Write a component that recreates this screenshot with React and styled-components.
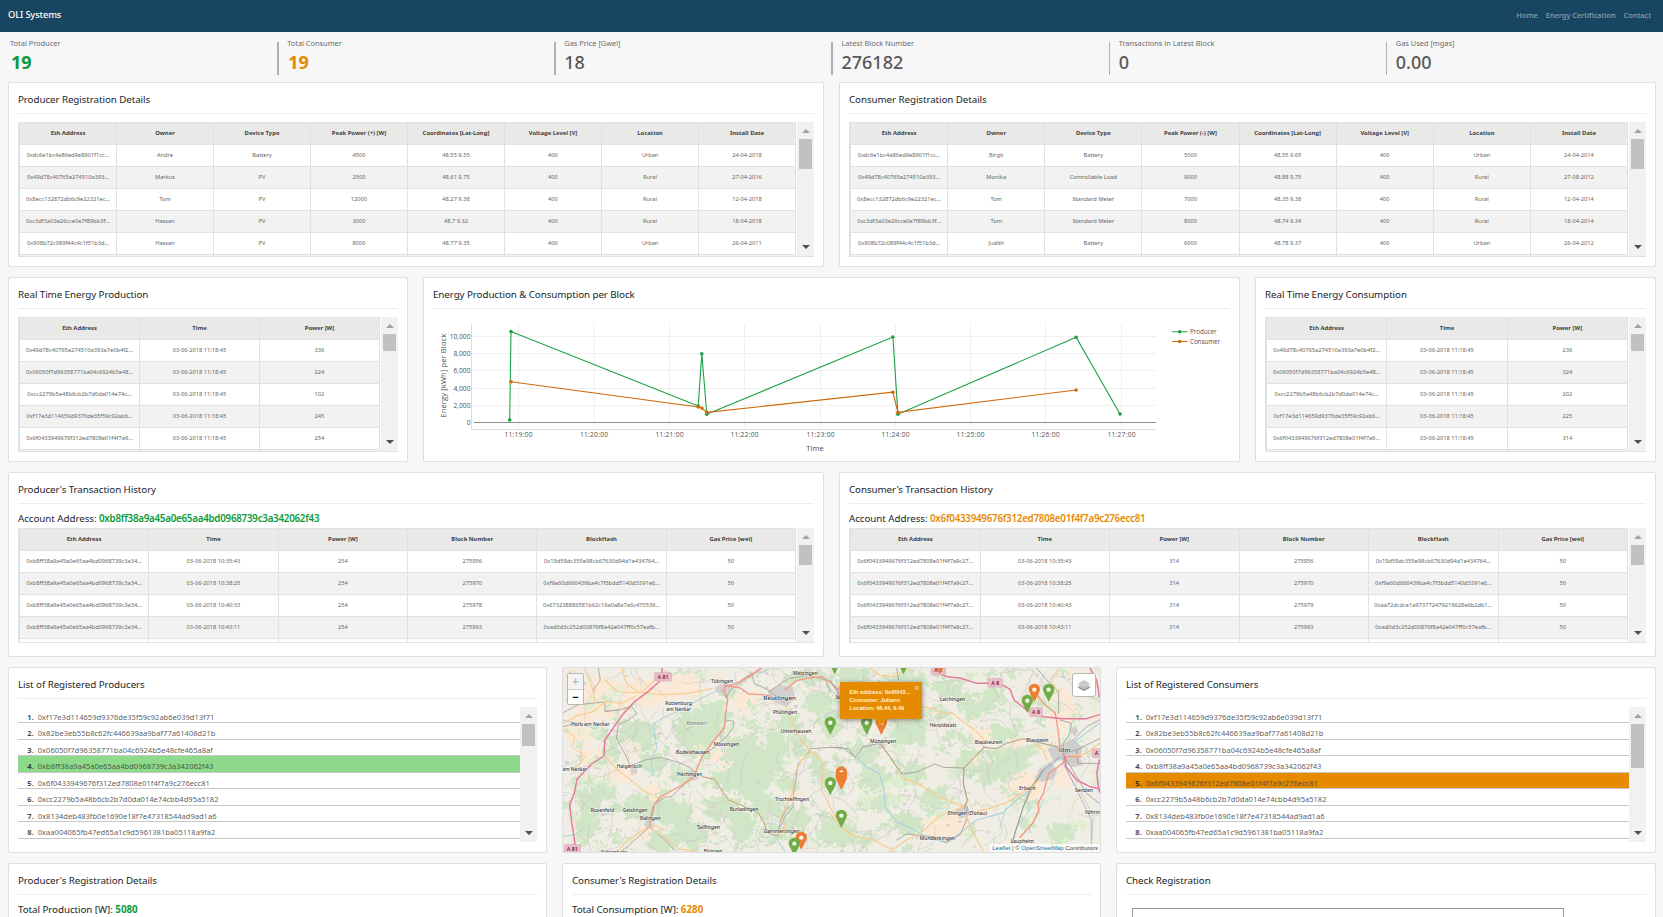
import React from "react";
import styled, { createGlobalStyle } from "styled-components";

const GREEN = "#0c9b3b";
const ORANGE = "#e68a00";

const GlobalStyle = createGlobalStyle`
  html, body { margin: 0; padding: 0; background: #f7f7f7; }
  body { font-family: "Noto Sans", "Open Sans", sans-serif; color: #212529; width: 1663px; height: 917px; overflow: hidden; }
  * { box-sizing: border-box; }
`;

const Page = styled.div`
  width: 1663px;
  height: 917px;
  overflow: hidden;
  display: flex;
  flex-direction: column;
`;

const Navbar = styled.nav`
  height: 32px;
  flex: none;
  background: #184562;
  display: flex;
  justify-content: space-between;
  padding: 5px 12px 7px 8px;
  line-height: 20px;
`;

const Brand = styled.span`
  color: #fff;
  font-size: 9.3px;
  font-weight: 500;
  letter-spacing: -0.14px;
`;

const NavLinks = styled.div`
  display: flex;
  gap: 8px;
`;

const NavLink = styled.a`
  color: #8ba2b1;
  font-size: 7.5px;
  font-weight: 500;
  letter-spacing: -0.05px;
`;

const Stats = styled.section`
  height: 50px;
  flex: none;
  display: grid;
  grid-template-columns: repeat(6, 1fr);
`;

const Stat = styled.div`
  display: flex;
  gap: ${(p) => (p.$thin ? 9 : 8)}px;
`;

const StatDivider = styled.div`
  width: ${(p) => (p.$thin ? 1 : 2)}px;
  height: 33px;
  margin-top: 10px;
  background: ${(p) => (p.$hidden ? "transparent" : "#adb1b4")};
`;

const StatText = styled.div`
  padding-top: 6px;
`;

const StatLabel = styled.div`
  font-size: 7.4px;
  line-height: 11px;
  color: #6a6a6a;
`;

const StatValue = styled.div`
  font-size: 18px;
  line-height: 26px;
  padding-left: ${(p) => (p.$color ? 1 : 0)}px;
  font-weight: ${(p) => (p.$color ? 700 : 500)};
  color: ${(p) => p.$color || "#585858"};
`;

const Row = styled.div`
  display: grid;
  grid-template-columns: ${(p) => p.$cols};
  gap: 15px;
  height: ${(p) => p.$h || 185}px;
  flex: none;
  margin: 0 7px 10px 8px;
`;

const Panel = styled.section`
  background: #fff;
  border: 1px solid #dedfe0;
  border-radius: 2px;
  padding: 0 9px;
  min-width: 0;
  overflow: hidden;
`;

const Title = styled.h2`
  margin: 0 0 8px;
  padding: 9px 0 6px;
  height: 31px;
  border-bottom: 1px solid #ececec;
  font-size: 9.8px;
  line-height: 15px;
  font-weight: 400;
  letter-spacing: -0.08px;
  white-space: nowrap;
`;

const Summary = styled.div`
  margin-top: -8px;
  padding-top: 5px;
  height: 24px;
  line-height: 19px;
  font-size: 9.8px;
  letter-spacing: -0.06px;
  white-space: nowrap;
`;

const SummaryValue = styled.span`
  color: ${(p) => p.$color};
  font-weight: ${(p) => (p.$bold ? 700 : 600)};
  letter-spacing: ${(p) => (p.$bold ? 0 : -0.26)}px;
`;

const ScrollBox = styled.div`
  display: flex;
  height: ${(p) => p.$h}px;
  border: 0 solid #dee2e6;
  border-width: ${(p) => (p.$framed ? "0 0 1px 1px" : "0")};
  overflow: hidden;
`;

const Bar = styled.div`
  width: 17px;
  flex: none;
  background: #f1f1f1;
  display: flex;
  flex-direction: column;
  align-items: center;
`;

const Arrow = styled.div`
  height: 17px;
  display: flex;
  align-items: center;
  padding-top: ${(p) => (p.$down ? 0 : 1)}px;
  margin-top: ${(p) => (p.$down ? "auto" : 0)};
  margin-bottom: ${(p) => (p.$down ? 1 : 0)}px;
  &::before {
    content: "";
    border: 4px solid transparent;
    border-width: ${(p) => (p.$down ? "4px 4px 0" : "0 4px 4px")};
    border-top-color: #505050;
    border-bottom-color: #a3a3a3;
  }
`;

const Thumb = styled.div`
  width: 13px;
  height: ${(p) => p.$h}px;
  background: #c1c1c1;
`;

function Scrollbar({ thumb }) {
  return (
    <Bar>
      <Arrow />
      <Thumb $h={thumb} />
      <Arrow $down />
    </Bar>
  );
}

const Grid = styled.div`
  flex: 1;
  min-width: 0;
  margin-right: 1px;
  border-top: 1px solid #dee2e6;
  border-left: 1px solid #dee2e6;
`;

const Line = styled.div`
  display: grid;
  grid-template-columns: repeat(${(p) => p.$n}, 1fr);
  height: 22px;
  background: ${(p) => (p.$head ? "#e9e9e7" : p.$odd ? "#f2f2f2" : "#fff")};
  border-bottom: 1px solid #dee2e6;
  font-size: ${(p) => (p.$head ? 5.9 : 5.7)}px;
  font-weight: ${(p) => (p.$head ? 700 : 400)};
  color: ${(p) => (p.$head ? "#3c3f42" : "#666")};
`;

const Cell = styled.div`
  border-right: 1px solid #dee2e6;
  text-align: center;
  line-height: 21px;
  white-space: nowrap;
  overflow: hidden;
`;

function DataTable({ head, rows, height, thumb }) {
  return (
    <ScrollBox $h={height} $framed>
      <Grid>
        <Line $head $n={head.length}>
          {head.map((h) => <Cell key={h}>{h}</Cell>)}
        </Line>
        {rows.map((r, i) => (
          <Line key={i} $n={head.length} $odd={i % 2 === 1}>
            {r.map((c, j) => <Cell key={j}>{c}</Cell>)}
          </Line>
        ))}
        <Line $n={head.length} $odd={rows.length % 2 === 1}>
          {head.map((h) => <Cell key={h} />)}
        </Line>
      </Grid>
      <Scrollbar thumb={thumb} />
    </ScrollBox>
  );
}

const List = styled.ol`
  flex: 1;
  margin: -0.5px 0 0;
  padding: 0;
  list-style: none;
`;

const ListItem = styled.li`
  height: 16.5px;
  border-bottom: 1px solid #c8c8c8;
  background: ${(p) => p.$bg || "transparent"};
  padding: 5px 0 0 9.3px;
  line-height: 11px;
  font-size: 7.55px;
  color: rgba(60, 60, 60, 0.85);
  display: flex;
  b { color: rgba(20, 20, 20, 0.8); width: 10.5px; }
`;

const ADDRESSES = [
  "0xf17e3d114659d9376de35f59c92ab6e039d13f71",
  "0x82be3eb55b8c62fc446639aa9baf77a61408d21b",
  "0x06050f7d96358771ba04c6924b5e48cfe465a8af",
  "0xb8ff38a9a45a0e65aa4bd0968739c3a342062f43",
  "0x6f0433949676f312ed7808e01f4f7a9c276ecc81",
  "0xcc2279b5a48b6cb2b7d0da014e74cbb4d95a5182",
  "0x8134deb483fb0e1690e18f7e47318544ad9ad1a6",
  "0xaa004065fb47ed65a1c9d5961381ba05118a9fa2",
];

function AddressList({ active, color, thumb }) {
  return (
    <ScrollBox $h={135}>
      <List>
        {ADDRESSES.map((a, i) => (
          <ListItem key={a} $bg={i === active ? color : undefined}>
            <b>{i + 1}.</b>
            {a}
          </ListItem>
        ))}
      </List>
      <Scrollbar thumb={thumb} />
    </ScrollBox>
  );
}

const regHead = (sign) => ["Eth Address", "Owner", "Device Type", `Peak Power (${sign}) [W]`, "Coordinates [Lat-Long]", "Voltage Level [V]", "Location", "Install Date"];
const REG_ADDR = ["0xdc6e1bc4a86ed9e8901f1cc...", "0x49d78c40765a274510a393...", "0x8ecc132872db6c9e22321ec...", "0xc3df3a03e26cce0e7f89bb3f...", "0x908b72c089f44c4c1f51b3d..."];
const PRODUCERS = [
  ["Andre", "Battery", "4500", "48.55 9.55", "400", "Urban", "24-04-2018"],
  ["Markus", "PV", "2500", "48.61 9.75", "400", "Rural", "27-04-2016"],
  ["Tom", "PV", "12000", "48.27 9.38", "400", "Rural", "12-04-2018"],
  ["Hassan", "PV", "3000", "48.7 9.32", "400", "Rural", "18-04-2018"],
  ["Hassan", "PV", "8000", "48.77 9.35", "400", "Urban", "26-04-2011"],
].map((r, i) => [REG_ADDR[i], ...r]);
const CONSUMERS = [
  ["Birgit", "Battery", "5000", "48.55 9.65", "400", "Urban", "24-04-2014"],
  ["Monika", "Controllable Load", "9000", "48.88 9.75", "400", "Rural", "27-08-2012"],
  ["Tom", "Standard Meter", "7000", "48.35 9.38", "400", "Rural", "12-04-2014"],
  ["Tom", "Standard Meter", "8000", "48.74 9.34", "400", "Rural", "18-04-2014"],
  ["Judith", "Battery", "6000", "48.78 9.37", "400", "Urban", "26-04-2012"],
].map((r, i) => [REG_ADDR[i], ...r]);

const LIVE_ADDR = ["0x49d78c40765a274510a393a7e0b4f2...", "0x06050f7d96358771ba04c6924b5e48...", "0xcc2279b5a48b6cb2b7d0da014e74c...", "0xf17e3d114659d9376de35f59c92ab6...", "0x6f0433949676f312ed7808e01f4f7a9..."];
const live = (vals) => vals.map((v, i) => [LIVE_ADDR[i], "03-06-2018 11:18:45", v]);

const TX_HEAD = ["Eth Address", "Time", "Power [W]", "Block Number", "BlockHash", "Gas Price [wei]"];
const tx = (addr, power, rows) => rows.map(([t, b, h]) => [addr, `03-06-2018 ${t}`, power, b, h, "50"]);
const TX_PROD = tx("0xb8ff38a9a45a0e65aa4bd0968739c3a34...", "254", [
  ["10:35:43", "275956", "0x19d59dc355e98cb67630d94d1e434764..."],
  ["10:38:25", "275970", "0xf9a60d666439ba4c7f3bdd5140d3391e6..."],
  ["10:40:33", "275978", "0x673238886581b62c16a0a8a7a6c470536..."],
  ["10:43:11", "275993", "0xad0d3c252d00876f8a42e047ff0c57eafb..."],
]);
const TX_CONS = tx("0x6f0433949676f312ed7808e01f4f7a9c27...", "314", [
  ["10:35:43", "275956", "0x19d59dc355e98cb67630d94d1e434764..."],
  ["10:38:25", "275970", "0xf9a60d666439ba4c7f3bdd5140d3391e6..."],
  ["10:40:43", "275979", "0xaa72dcdce1a973772479219628e6b2db1..."],
  ["10:43:11", "275993", "0xad0d3c252d00876f8a42e047ff0c57eafb..."],
]);

/* ---------- line chart ---------- */

const ChartSvg = styled.svg`
  display: block;
  width: 797px;
  height: 140px;
  text { font-family: "Open Sans", "Noto Sans", sans-serif; fill: #505050; }
`;

const PROD_LINE = [[509.7, 420], [511, 331.5], [698.2, 406], [701.8, 353.7], [706.8, 414.3], [892.9, 337], [897.9, 414.3], [1076.1, 337.3], [1120, 414]];
const CONS_LINE = [[511, 381.8], [698.2, 407], [701.8, 408], [706.8, 412.4], [892.9, 392.2], [897.9, 412.4], [1076.1, 390]];
const X_TICKS = [518.5, 594, 669.5, 744.5, 820.5, 895.5, 970.5, 1045.5, 1121.5];
const Y_TICKS = [["10,000", 336.5], ["8,000", 353.5], ["6,000", 370.5], ["4,000", 388.5], ["2,000", 405.5], ["0", 422.5]];

function Series({ pts, color }) {
  return (
    <g>
      <polyline points={pts.map((p) => p.join(",")).join(" ")} fill="none" stroke={color} strokeWidth="1.1" />
      {pts.map(([x, y]) => <circle key={x} cx={x} cy={y} r="1.8" fill={color} />)}
    </g>
  );
}

function Legend({ y, color, label, width }) {
  return (
    <g>
      <line x1="1172" x2="1187.5" y1={y} y2={y} stroke={color} strokeWidth="1.1" />
      <circle cx="1179.7" cy={y} r="1.8" fill={color} />
      <text x="1190" y={y + 2.4} fontSize="6.3" textLength={width}>{label}</text>
    </g>
  );
}

function EnergyChart() {
  return (
    <ChartSvg viewBox="433 317 797 140">
      {X_TICKS.map((x) => <line key={x} x1={x} x2={x} y1="324" y2="427" stroke="#f0f0f0" />)}
      {Y_TICKS.map(([l, y]) => <line key={l} x1="474" x2="1156" y1={y} y2={y} stroke={l === "0" ? "#8e8e8e" : "#f0f0f0"} />)}
      <path d="M471.5 324V429.5H1156" fill="none" stroke="#dcdcdc" />
      <Series pts={PROD_LINE} color="#1ba045" />
      <Series pts={CONS_LINE} color="#d0690b" />
      {Y_TICKS.map(([l, y]) => <text key={l} x="470.5" y={y + 2.4} textAnchor="end" fontSize="6.7">{l}</text>)}
      {X_TICKS.map((x, i) => <text key={x} x={x} y="437.4" textAnchor="middle" fontSize="6.7" textLength="28">{`11:${19 + i}:00`}</text>)}
      <text x="815" y="451.2" textAnchor="middle" fontSize="7.6" textLength="17.5">Time</text>
      <text transform="translate(446.3 375.7) rotate(-90)" textAnchor="middle" fontSize="7.6" textLength="84">Energy [kWh] per Block</text>
      <Legend y={331.7} color="#1ba045" label="Producer" width="26.5" />
      <Legend y={341.5} color="#d0690b" label="Consumer" width="30" />
    </ChartSvg>
  );
}

/* ---------- map ---------- */

const MapFrame = styled.section`
  position: relative;
  border: 1px solid #dedfe0;
  border-radius: 2px;
  overflow: hidden;
  background: #f1eee6;
`;

const Tiles = styled.svg`
  display: block;
  width: 537px;
  height: 184px;
`;

const ZoomControl = styled.div`
  position: absolute;
  left: 4px;
  top: 5px;
  width: 17px;
  height: 32px;
  border: 1px solid #b9b9b3;
  border-radius: 2px;
  background: #fff;
  font: bold 11px/15px "Liberation Sans", sans-serif;
  text-align: center;
`;

const ZoomButton = styled.div`
  height: 15px;
  color: ${(p) => (p.$off ? "#b8b8b8" : "#111")};
  background: ${(p) => (p.$off ? "#f4f4f4" : "#fff")};
  & + & { border-top: 1px solid #ccc; }
`;

const LayersControl = styled.div`
  position: absolute;
  left: 509px;
  top: 5px;
  width: 24px;
  height: 24px;
  border: 1px solid #b6b6b2;
  border-radius: 3px;
  background: #fff;
  display: grid;
  place-items: center;
`;

const Attribution = styled.div`
  position: absolute;
  right: 0;
  bottom: 0;
  height: 8px;
  padding: 0 2px;
  background: rgba(255, 255, 255, 0.75);
  font: 6px/8px "Liberation Sans", sans-serif;
  color: #444;
  white-space: nowrap;
  a { color: #0078a8; }
`;

const Popup = styled.div`
  position: absolute;
  left: 277px;
  top: 14px;
  width: 82px;
  height: 37px;
  padding: 6px 0 0 9.5px;
  background: ${ORANGE};
  color: #fff2dc;
  font: bold 5.6px/8px "Liberation Sans", sans-serif;
  white-space: nowrap;
  box-shadow: 0 1px 5px rgba(0, 0, 0, 0.45);
  &::after {
    content: "";
    position: absolute;
    left: 35px;
    top: 37px;
    border: 6px solid transparent;
    border-top-color: ${ORANGE};
    border-bottom: 0;
  }
`;

const PopupClose = styled.span`
  position: absolute;
  right: 2.5px;
  top: 1.5px;
  color: #ddc9a8;
  font-size: 9px;
`;

const rng = (seed) => () => {
  seed = (seed * 1664525 + 1013904223) % 4294967296;
  return seed / 4294967296;
};

const WOODS = [
  [135, 62, 24, 22], [150, 50, 18, 16], [82, 68, 14, 16], [66, 60, 10, 10], [190, 100, 20, 34], [212, 80, 14, 24],
  [205, 140, 18, 12], [160, 140, 20, 14], [110, 145, 20, 14], [75, 140, 16, 12], [40, 125, 14, 10], [25, 155, 12, 16],
  [100, 172, 18, 10], [180, 160, 14, 14], [255, 35, 16, 12], [268, 55, 12, 14], [255, 100, 10, 14], [235, 150, 12, 12],
  [225, 115, 12, 9], [275, 165, 20, 14], [300, 85, 14, 12], [310, 110, 16, 14], [345, 65, 18, 14], [385, 20, 16, 10],
  [410, 35, 14, 12], [430, 30, 12, 10], [350, 105, 14, 12], [370, 130, 14, 10], [320, 135, 12, 10], [345, 155, 16, 10],
  [440, 95, 22, 16], [425, 105, 14, 12], [498, 165, 14, 12], [300, 172, 10, 6], [440, 65, 14, 8], [375, 45, 10, 8],
  [480, 75, 12, 8], [460, 85, 12, 8], [90, 95, 12, 10], [50, 85, 8, 8], [120, 110, 10, 8], [330, 40, 14, 14],
  [240, 10, 20, 8], [290, 8, 20, 8], [340, 12, 18, 8], [165, 110, 18, 12], [225, 60, 12, 16], [240, 80, 12, 12],
  [170, 78, 14, 10], [25, 130, 14, 14], [130, 165, 18, 12], [210, 165, 14, 10], [405, 95, 14, 12], [395, 70, 14, 8],
];
const FIELDS = [
  [40, 30, 34, 20], [85, 25, 26, 14], [20, 60, 20, 14], [120, 20, 20, 10], [30, 90, 18, 10], [160, 88, 12, 9],
  [60, 105, 16, 8], [92, 130, 10, 16], [180, 30, 14, 8], [85, 165, 12, 8], [385, 158, 24, 12], [462, 120, 18, 18],
  [498, 40, 14, 22], [455, 78, 12, 10], [525, 20, 10, 14], [420, 65, 14, 8], [505, 85, 12, 10], [130, 60, 10, 6], [215, 25, 14, 8], [500, 110, 10, 10],
];

/* Small patches: woods, meadows, fields and open land. */
const patchColor = (k) => (k < 0.5 ? "#d1e5c7" : k < 0.72 ? "#deedd0" : k < 0.85 ? "#f8e8d6" : "#f0ede5");
const SMALL = (() => {
  const r = rng(7);
  return Array.from({ length: 420 }, () => [r() * 550, r() * 195, 2 + r() * 6, 1.5 + r() * 4, r()]);
})();

const LANES = (() => {
  const r = rng(23);
  return Array.from({ length: 210 }, () => {
    let x = r() * 537;
    let y = r() * 184;
    let a = r() * 6.28;
    let d = `M${x.toFixed(1)} ${y.toFixed(1)}`;
    for (let i = 0; i < 7; i++) {
      a += (r() - 0.5) * 1.3;
      x += Math.cos(a) * 5;
      y += Math.sin(a) * 5;
      d += `L${x.toFixed(1)} ${y.toFixed(1)}`;
    }
    return d;
  }).join("");
})();

const TOWNS = (() => {
  const r = rng(91);
  return Array.from({ length: 120 }, () => [r() * 537, r() * 184, 0.8 + r() * 1.6, 0.7 + r() * 1.2]);
})();

/* West and east halves are drawn on 3x tile grids with their own origins. */
const WEST = "translate(-8 -8) scale(0.33333)";
const EAST = "translate(267 -8) scale(0.33333)";

const WEST_LABELS = [
  ["Tübingen", 501, 68, 66], ["Reutlingen", 674, 121, 98, 17], ["Metzingen", 751, 44, 74], ["Pfullingen", 690, 163, 72],
  ["Unterhausen", 723, 219, 92], ["Rottenburg", 371, 134, 80], ["am Neckar", 371, 154, 74], ["Rammert", 425, 194, 62, 13, true],
  ["Mössingen", 514, 259, 76], ["Bodelshausen", 413, 281, 100], ["Horb am Neckar", 106, 197, 116], ["Haigerloch", 223, 325, 76],
  ["Hechingen", 404, 349, 76], ["Rosenfeld", 142, 455, 70], ["Geislingen", 240, 455, 74], ["Balingen", 286, 479, 62],
  ["Burladingen", 567, 453, 86], ["Trochtelfingen", 711, 422, 102], ["Tailfingen", 460, 508, 70], ["Gammertingen", 680, 518, 108],
  ["am Neckar", 59, 333, 74], ["Schömberg", 178, 582, 78], ["Ebingen", 474, 579, 56],
];
const EAST_LABELS = [
  ["Laichingen", 367, 123, 76], ["Heroldstatt", 339, 200, 80], ["Münsingen", 159, 250, 78], ["Blaubeuren", 475, 251, 82],
  ["Blaustein", 622, 245, 66], ["Ulm", 703, 277, 36, 18], ["Erbach", 592, 390, 50], ["Senden", 762, 395, 54], ["Vöhringen", 800, 463, 72],
  ["Ehingen (Donau)", 412, 464, 118], ["Munderkingen", 322, 541, 106], ["Laupheim", 577, 549, 70], ["Bad Urach", 42, 117, 50],
];

function Labels({ items }) {
  return items.map(([t, x, y, w, s = 14, it]) => (
    <text key={t + x} x={x} y={y} textAnchor="middle" textLength={w} lengthAdjust="spacingAndGlyphs" fontSize={s} fontWeight="500" fontStyle={it ? "italic" : "normal"} fill={it ? "#6d8267" : "#333"} stroke="#fff" strokeOpacity="0.6" strokeWidth="3" paintOrder="stroke">
      {t}
    </text>
  ));
}

function Shield({ x, y, label, w = 46 }) {
  return (
    <g>
      <rect x={x - w / 2} y={y - 12} width={w} height="25" rx="3" fill="#eabfcb" stroke="#d9a3b3" strokeWidth="2" />
      <text x={x} y={y + 6} textAnchor="middle" fontSize="16" fontWeight="600" fill="#7d2240">{label}</text>
    </g>
  );
}

function Pin({ x, y, color, tall = 0 }) {
  return (
    <g transform={`translate(${x} ${y})`}>
      <path d={`M0 0L-13 -26Q-17 -32 -17 -38V${-38 - tall}A17 17 0 0 1 17 ${-38 - tall}V-38Q17 -32 13 -26Z`} fill={color} />
      {tall ? <path d={`M-7 ${-38 - tall}Q0 ${-48 - tall} 7 ${-38 - tall}Z`} fill="#fff" /> : <circle cy="-37" r="6.5" fill="#f6f9f0" />}
    </g>
  );
}

const PG = "#70ad47";
const PO = "#ed7d31";

function MapTiles() {
  return (
    <Tiles viewBox="0 0 537 184" fontFamily="Noto Sans, sans-serif">
      <defs>
        <filter id="ragged" x="-5%" y="-5%" width="110%" height="110%">
          <feTurbulence type="fractalNoise" baseFrequency="0.16" numOctaves="3" seed="4" />
          <feDisplacementMap in="SourceGraphic" scale="20" xChannelSelector="R" yChannelSelector="G" />
        </filter>
      </defs>
      <rect width="537" height="184" fill="#f0ede5" />
      <g filter="url(#ragged)">
        {FIELDS.map(([x, y, a, b], i) => <ellipse key={i} cx={x} cy={y} rx={a} ry={b} fill="#fbe9d6" />)}
        {WOODS.map(([x, y, a, b], i) => <ellipse key={i} cx={x} cy={y} rx={a} ry={b} fill="#d1e5c7" />)}
        {SMALL.map(([x, y, a, b, k], i) => <ellipse key={i} cx={x} cy={y} rx={a} ry={b} fill={patchColor(k)} />)}
        {WOODS.slice(0, 24).map(([x, y, a, b], i) => <ellipse key={i} cx={x} cy={y} rx={a * 0.75} ry={b * 0.75} fill="#d1e5c7" />)}
      </g>
      {TOWNS.map(([x, y, a, b], i) => <ellipse key={i} cx={x} cy={y} rx={a} ry={b} fill="#d6d3d1" />)}
      <path d={LANES} fill="none" stroke="#c6c5c3" strokeWidth="0.5" />

      <g transform={WEST} fill="none" strokeLinejoin="round" strokeLinecap="round">
        <g fill="#d3d0cf" stroke="none">
          <path d="M640 96l30-22 45 8 4 34-24 26-34-14-22-12zM478 84l30-18 26 6-12 22-30 8zM405 330l22 2 4 24-20 8-18-14zM272 476l20 4 4 22-18 6-10-14zM225 322l20 2 2 16-18 6z" />
        </g>
        <g stroke="#a9d3de" strokeWidth="3">
          <path d="M490 92L460 104 430 120 402 136 360 158 320 176 296 192 300 230 306 262 288 300 294 340 282 352" />
          <path d="M24 180L70 190 120 206 150 182 M24 530L60 524 90 500 M640 510L660 530 690 574" />
        </g>
        <g stroke="#a8a8a5" strokeWidth="2.8">
          <path d="M24 158L70 134 150 126 150 154 190 150 230 140 246 160 220 180 190 194 184 234 214 290 226 318 270 300 316 292 366 306 404 322 420 336" />
          <path d="M500 90L514 114 526 90 560 66 600 40 620 26 M560 60L590 40 598 70 640 90 690 130 M640 96L700 56 760 46 812 60 826 96" />
          <path d="M510 180L536 184 534 204 514 230 484 258 456 276 440 290 M420 346L380 380 350 410 330 412 300 430 284 500 330 540 360 572 M284 500L240 540 200 574" />
          <path d="M768 266L826 262 860 262 900 290 M768 266L752 290 730 310 716 400 714 440 690 470 676 500 M150 154L190 150 M24 200L60 190 M130 24L136 60 114 92" />
        </g>
        <g stroke="#f8cd8f" strokeWidth="3.5">
          <path d="M24 190L70 166 110 156 156 124 200 130 240 110 M200 24L214 70 250 96 320 104 400 100 470 86 M150 60L190 96 260 98 320 40" />
          <path d="M150 290L186 328 214 350 240 370 262 390 290 404 M186 574L220 540 280 500 340 540 370 566 420 574 M90 24L114 92 120 130" />
          <path d="M690 130L706 180 738 240 770 276 800 300 804 340 800 390 830 450 860 500 900 532 M284 490L330 510" />
          <path d="M440 350L480 358 500 390 520 420 570 440 610 458 626 486 640 520 668 528 690 500 680 470 712 400 716 350 740 300 768 276" />
          <path d="M24 210L60 230 50 260 90 290 70 320 40 330" strokeWidth="3" />
        </g>
        <g stroke="#aaa58e" strokeWidth="2.5"><path d="M440 350L480 358 500 390 520 420 570 440 610 458 626 486 640 520 668 528 676 480 700 440" /></g>
        <g stroke="#f59a82" strokeWidth="4.2">
          <path d="M510 76L508 90 518 116 512 160 508 204 478 240 444 284 424 330 420 348 380 376 354 390 314 412 294 440 284 488" />
          <path d="M510 76L556 84 580 102 620 104 654 110 M520 80L556 64 590 44 618 24 M690 90L724 62 760 54 800 50 830 70 850 90" />
        </g>
        <path d="M322 24L318 60 280 94 240 124 206 160 180 196 150 240 146 288 110 312 66 358 58 400 44 434 50 486 60 550 52 580" stroke="#e6799a" strokeWidth="4.4" />
      </g>

      <g transform={EAST} fill="none" strokeLinejoin="round" strokeLinecap="round">
        <g fill="#d0cdcc" stroke="none">
          <path d="M652 266l40-12 36-16 30 24-8 30 10 24-36 6-26-20-28-2zM628 326l34-18 20 20-12 30-34 8-20-8zM376 452l30-22 12 20-8 20-22 6zM140 240l24 4 2 20-20 4zM720 210l16-12 10 16-12 16z" />
        </g>
        <g stroke="#a9d3de" strokeWidth="3.4">
          <path d="M84 296L110 322 148 340 160 380 166 440 200 486 250 508 290 532 350 548 390 520 440 480 520 458 560 420 600 390 630 350 660 320 700 284 740 240 808 190" />
          <path d="M700 290L720 350 760 410 790 470 786 540 M590 400L600 450 560 500 546 560 M510 500L530 440 M640 420L620 470 M420 340L424 360" strokeWidth="2.6" />
        </g>
        <g stroke="#a4a4a1" strokeWidth="2.8">
          <path d="M0 262L54 266 76 292 100 260 150 250 180 290 200 320 216 342 260 336 316 312 340 322 404 324" />
          <path d="M200 540L230 522 270 526 310 530 350 548 390 524 410 480 412 440 M546 548L580 440 604 390 640 330 690 290 M620 24L650 60 686 96 686 160 M704 280L740 270 808 236 M740 270L744 310 808 310" />
          <path d="M704 290L740 350 770 400 808 430 M690 180L724 190 720 220 700 250 700 276 M808 180L770 200 730 240 M200 24L206 60 M0 60L30 110" />
        </g>
        <g stroke="#f8cd8f" strokeWidth="3.5">
          <path d="M120 24L150 46 190 50 240 24 M276 140L310 146 336 160 370 160 400 186 440 214 460 236 462 262 402 324 400 370 412 420 400 440 330 468 280 512 230 540 180 574" />
          <path d="M150 250L180 290 206 330 214 352 270 374 330 412 400 440 M418 458L470 448 530 428 590 390 630 360 M410 470L430 520 460 574 M0 460L40 508 76 530 130 540 180 566" />
          <path d="M690 24L664 60 680 90 M780 24L790 70 808 84 M650 300L640 270 600 240 M720 290L770 280 808 250" />
        </g>
        <g stroke="#a69a82" strokeWidth="2.8"><path d="M150 250L180 290 206 330 M462 262L500 266 530 250 580 236 620 246 690 262 M462 262L402 324 400 370 412 420 404 446 M546 548L580 440 604 380 640 330" /></g>
        <g stroke="#f59a82" strokeWidth="4.2"><path d="M704 290L710 300 680 324 656 340 640 400 624 430 626 452 608 490 570 532 M610 90L640 130 676 160 684 210 690 262 704 290 756 290" /></g>
        <path d="M318 36L350 50 390 54 440 70 510 70 540 88 552 120 590 150 640 170 700 176 770 176 808 164 M704 290L708 320 740 360 780 380 808 386 M780 24L800 60 808 110 M808 300L800 340 808 396" stroke="#e6799a" strokeWidth="4.4" />
        <path d="M700 280L700 310 730 370 760 430 784 480 784 574" stroke="#b9a3c4" strokeWidth="3" strokeDasharray="7 4" />
      </g>

      <g transform={WEST}>
        <Labels items={WEST_LABELS} />
        <Shield x={324} y={50} label="A 81" w={50} />
        <Shield x={52} y={566} label="A 81" w={48} />
      </g>
      <g transform={EAST}>
        <Labels items={EAST_LABELS} />
        <Shield x={325} y={31} label="A 8" w={42} />
        <Shield x={496} y={68} label="A 8" w={42} />
        <Shield x={618} y={156} label="A 8" w={38} />
        <Shield x={806} y={279} label="A 7" w={38} />
        <Pin x={14} y={43} color={PG} />
        <Pin x={220} y={43} color={PG} />
        <Pin x={330} y={43} color={PO} />
        <Pin x={656} y={126} color={PG} />
        <Pin x={613} y={126} color={PO} />
        <Pin x={592} y={159} color={PG} />
        <Pin x={1} y={225} color={PG} />
        <Pin x={110} y={225} color={PG} />
        <Pin x={154} y={225} color={PO} />
        <Pin x={1} y={406} color={PG} />
        <Pin x={34} y={390} color={PO} tall={16} />
        <Pin x={34} y={504} color={PG} />
      </g>
      <g transform={WEST}>
        <Pin x={739} y={570} color={PO} />
        <Pin x={718} y={588} color={PG} />
      </g>
    </Tiles>
  );
}

function RegionMap() {
  return (
    <MapFrame>
      <MapTiles />
      <ZoomControl>
        <ZoomButton $off>+</ZoomButton>
        <ZoomButton>−</ZoomButton>
      </ZoomControl>
      <LayersControl>
        <svg width="14" height="13" viewBox="0 0 14 13">
          <path d="M7 5.2L13.5 8.4 7 12 .5 8.4z" fill="#8f8f8f" />
          <path d="M7 3.2L13.5 6.4 7 10 .5 6.4z" fill="#b4b4b4" stroke="#fff" strokeWidth=".4" />
          <path d="M7 .8L13.5 4.2 7 7.8 .5 4.2z" fill="#c9c9c9" stroke="#fff" strokeWidth=".4" />
        </svg>
      </LayersControl>
      <Popup>
        <PopupClose>×</PopupClose>
        Eth address: 0x6f043...
        <br />
        Consumer: Juliano
        <br />
        Location: 48.44, 9.49
      </Popup>
      <Attribution>
        <a>Leaflet</a> | © <a>OpenStreetMap</a> Contributors
      </Attribution>
    </MapFrame>
  );
}

const TextInput = styled.div`
  margin: 13px 0 0 6px;
  width: 432px;
  height: 26px;
  border: 1px solid #9a9a9a;
`;

const STATS = [
  ["Total Producer", "19", GREEN],
  ["Total Consumer", "19", ORANGE],
  ["Gas Price [Gwei]", "18"],
  ["Latest Block Number", "276182"],
  ["Transactions in Latest Block", "0"],
  ["Gas Used [mgas]", "0.00"],
];

const LIVE_HEAD = ["Eth Address", "Time", "Power [W]"];

export default function App() {
  return (
    <Page>
      <GlobalStyle />
      <Navbar>
        <Brand>OLI Systems</Brand>
        <NavLinks>
          <NavLink>Home</NavLink>
          <NavLink>Energy Certification</NavLink>
          <NavLink>Contact</NavLink>
        </NavLinks>
      </Navbar>

      <Stats>
        {STATS.map(([label, value, color], i) => (
          <Stat key={label} $thin={i > 3}>
            <StatDivider $hidden={i === 0} $thin={i > 3} />
            <StatText>
              <StatLabel>{label}</StatLabel>
              <StatValue $color={color}>{value}</StatValue>
            </StatText>
          </Stat>
        ))}
      </Stats>

      <Row $cols="816px 817px">
        <Panel>
          <Title>Producer Registration Details</Title>
          <DataTable head={regHead("+")} rows={PRODUCERS} height={135} thumb={30} />
        </Panel>
        <Panel>
          <Title>Consumer Registration Details</Title>
          <DataTable head={regHead("-")} rows={CONSUMERS} height={135} thumb={30} />
        </Panel>
      </Row>

      <Row $cols="400px 817px 401px">
        <Panel>
          <Title>Real Time Energy Production</Title>
          <DataTable head={LIVE_HEAD} rows={live(["336", "224", "102", "245", "254"])} height={135} thumb={17} />
        </Panel>
        <Panel>
          <Title>Energy Production &amp; Consumption per Block</Title>
          <EnergyChart />
        </Panel>
        <Panel>
          <Title>Real Time Energy Consumption</Title>
          <DataTable head={LIVE_HEAD} rows={live(["236", "324", "202", "225", "314"])} height={135} thumb={17} />
        </Panel>
      </Row>

      <Row $cols="816px 817px">
        <Panel>
          <Title>Producer's Transaction History</Title>
          <Summary>
            Account Address: <SummaryValue $color={GREEN}>{ADDRESSES[3]}</SummaryValue>
          </Summary>
          <DataTable head={TX_HEAD} rows={TX_PROD} height={115} thumb={20} />
        </Panel>
        <Panel>
          <Title>Consumer's Transaction History</Title>
          <Summary>
            Account Address: <SummaryValue $color={ORANGE}>{ADDRESSES[4]}</SummaryValue>
          </Summary>
          <DataTable head={TX_HEAD} rows={TX_CONS} height={115} thumb={20} />
        </Panel>
      </Row>

      <Row $cols="539px 539px 540px" $h={186}>
        <Panel>
          <Title>List of Registered Producers</Title>
          <AddressList active={3} color="#8dda8b" thumb={22} />
        </Panel>
        <RegionMap />
        <Panel>
          <Title>List of Registered Consumers</Title>
          <AddressList active={4} color={ORANGE} thumb={44} />
        </Panel>
      </Row>

      <Row $cols="539px 539px 540px">
        <Panel>
          <Title>Producer's Registration Details</Title>
          <Summary>
            Total Production [W]: <SummaryValue $color={GREEN} $bold>5080</SummaryValue>
          </Summary>
        </Panel>
        <Panel>
          <Title>Consumer's Registration Details</Title>
          <Summary>
            Total Consumption [W]: <SummaryValue $color={ORANGE} $bold>6280</SummaryValue>
          </Summary>
        </Panel>
        <Panel>
          <Title>Check Registration</Title>
          <TextInput />
        </Panel>
      </Row>
    </Page>
  );
}
